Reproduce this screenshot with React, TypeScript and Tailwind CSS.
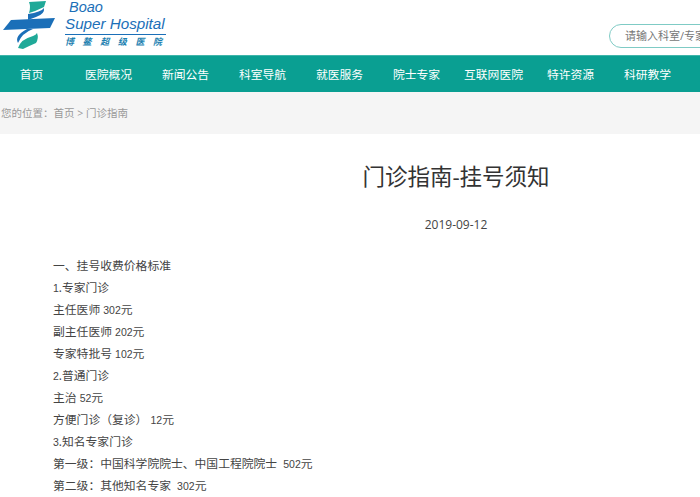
const navLinks = ["首页", "医院概况", "新闻公告", "科室导航", "就医服务", "院士专家", "互联网医院", "特许资源", "科研教学"];

const lines = [
  "一、挂号收费价格标准",
  "1.专家门诊",
  "主任医师 302元",
  "副主任医师 202元",
  "专家特批号 102元",
  "2.普通门诊",
  "主治 52元",
  "方便门诊（复诊） 12元",
  "3.知名专家门诊",
  "第一级：中国科学院院士、中国工程院院士  502元",
  "第二级：其他知名专家  302元",
];

function Logo() {
  return (
    <svg width="56" height="52" viewBox="0 0 56 52" className="shrink-0">
      <path d="M26 2 L43 1 L41 7 Q33 11 26 13 Q28 7 26 2Z" fill="#1fa998" />
      <path d="M25 14 Q38 12 41 8 Q42 14 33 17 L25 20Z" fill="#1b6fb8" />
      <path d="M8 20 L52 18 L47 28 L0 30Z" fill="#1b6fb8" />
      <path d="M24 29 L30 29 Q19 33 15 43 Q11 36 24 29Z" fill="#1b6fb8" />
      <path d="M30 36 Q33 35 34 33 Q36 38 33 43 Q26 46 20 49 L15 48 Q18 39 30 36Z" fill="#1fa998" />
    </svg>
  );
}

// digits in the article run smaller than the Chinese text
function Line({ text }: { text: string }) {
  return (
    <p className="h-[22px]">
      {text.split(/(\d+)/).map((part, i) =>
        /^\d+$/.test(part) ? (
          <span key={i} className="text-[10.5px] leading-none font-['Liberation_Sans',sans-serif]">{part}</span>
        ) : (
          part
        )
      )}
    </p>
  );
}

export default function App() {
  return (
    <div className="w-[700px] h-[497px] overflow-hidden bg-white font-['Open_Sans','Noto_Sans_CJK_SC',sans-serif]">
      {/* header */}
      <header className="h-[55px] w-[912px] flex">
        <div className="ml-[3px] flex">
          <Logo />
          <div className="ml-[6px] flex flex-col w-[101px]">
            <span className="text-[14.5px] leading-[15px] italic text-[#1b6fb8] font-['Liberation_Sans',sans-serif] pl-[4px]">Boao</span>
            <span className="text-[15.2px] leading-[17px] italic text-[#1b6fb8] font-['Liberation_Sans',sans-serif] whitespace-nowrap">Super Hospital</span>
            <div className="h-px bg-[#1b6fb8] mt-[2px]" />
            <span className="text-[9px] leading-[14px] italic font-bold text-[#1b7fb0] tracking-[8.6px] whitespace-nowrap">博鳌超级医院</span>
          </div>
        </div>
        <div className="ml-[443px] mt-[24px] h-[24px] w-[200px] rounded-full border border-[#7fcbc5] pl-[15px] text-[11px] leading-[22px] text-[#777] whitespace-nowrap">
          请输入科室/专家
        </div>
      </header>

      {/* nav */}
      <nav className="h-[37px] bg-[#0a9f92] border-t border-[#3fb5aa] flex -ml-[7px]">
        {navLinks.map((link) => (
          <a key={link} className="w-[77px] shrink-0 text-center text-white text-[11.8px] leading-[36px] whitespace-nowrap">
            {link}
          </a>
        ))}
      </nav>

      {/* breadcrumb */}
      <div className="h-[42px] bg-[#f5f5f5] text-[10.5px] leading-[43px] text-[#999] whitespace-nowrap pl-[1px]">
        您的位置：首页 &gt; 门诊指南
      </div>

      {/* article */}
      <main className="w-[912px]">
        <h1 className="mt-[26px] text-center text-[22.5px] leading-[34px] font-normal text-[#333]">门诊指南-挂号须知</h1>
        <p className="mt-[20px] text-center text-[12px] leading-[22px] text-[#444]">2019-09-12</p>
        <div className="mt-[18px] pl-[53px] text-[11.8px] leading-[22px] text-[#444] whitespace-pre">
          {lines.map((line) => (
            <Line key={line} text={line} />
          ))}
        </div>
      </main>
    </div>
  );
}
